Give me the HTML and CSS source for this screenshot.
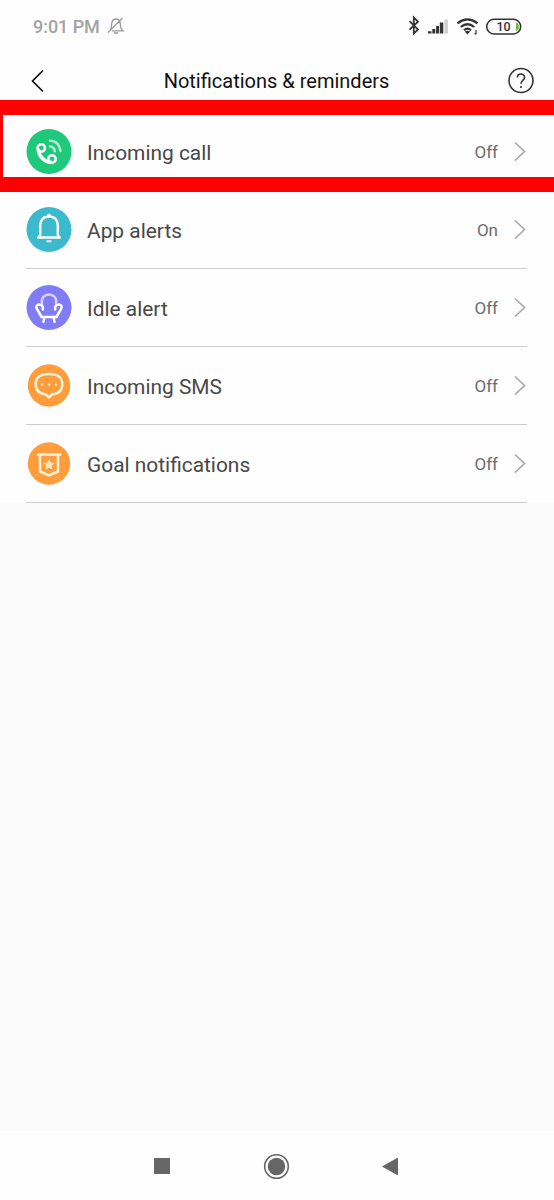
FILE: index.html
```html
<!DOCTYPE html>
<html lang="en">
<head>
<meta charset="utf-8">
<title>Notifications &amp; reminders</title>
<link rel="stylesheet" href="styles.css">
</head>
<body>
<div class="screen">
  <header class="status">
    <span class="time">9:01 PM</span>
    <svg class="mute" width="18" height="20" viewBox="0 0 18 20"><path d="M3 14.5C5 12.5 4.4 10 4.8 7C5.2 4 7 3 9 3S12.800 4 13.200 7C13.600 10 13 12.500 15.800 14.800H5M7 17H11M1 16.500L15.500 2"/></svg>
    <span class="grow"></span>
    <svg class="indicators" width="114" height="24" viewBox="0 0 114 24">
      <path class="bt" d="M1.500 7.200L10 15.600L5.800 19.500V3.500L10 7.700L1.500 15.600"/>
      <g class="bars"><path d="M20 17.300H23.500V19.500H20ZM24.300 15H27.300V19.500H24.300ZM28.100 12H31V19.500H28.100ZM31.800 8.500H35.300V19.500H31.800Z"/><path class="faint" d="M36.500 5.500H39.800V19.500H36.500Z"/></g>
      <path class="waves" d="M49.500 9.300Q59.500 1.500 69.500 9.300M52.800 13Q59.500 7.500 66.200 13M56 16.300Q59.500 13 63 16.300"/>
      <path class="fill" d="M56.800 17.600Q59.500 16 62.200 17.600L59.500 20.500ZM67.400 16V19H66L67.900 21L68.600 20V16Z"/>
      <rect class="battery" x="78.700" y="5.300" width="34" height="14.600" rx="7.300"/>
      <path class="charge" d="M108 8.500Q111 9.400 111 12.700T108 17Z"/>
      <text class="level" x="95.500" y="17.200">10</text>
    </svg>
  </header>
  <div class="titlebar">
    <svg class="back" width="14" height="24" viewBox="0 0 14 24"><path d="M12 1.500L1.500 12L12 22.500"/></svg>
    <h1 class="title">Notifications &amp; reminders</h1>
    <svg class="help" width="28" height="28" viewBox="0 0 28 28"><circle cx="14" cy="13.500" r="12"/><path d="M10.400 10.600C10.400 5.900 17.600 5.900 17.600 10.500C17.600 13.500 14 13.300 14 16.700"/><circle class="dot" cx="14" cy="20" r="1.100"/></svg>
  </div>
  <main class="list">
    <div class="row highlighted">
      <svg class="icon call" width="46" height="46" viewBox="0 0 46 46"><circle class="disc" cx="23" cy="23.500" r="22.500"/><circle class="shape" cx="15.300" cy="20" r="3.700"/><circle class="shape" cx="26" cy="31" r="3.700"/><path class="shape thick" d="M12.300 22C13 28.500 18.500 34.300 25 34.300"/><path class="soft" d="M24 12.800C30 12.800 34 17 34.500 23M24 18.500C26.800 18.700 28.500 20.500 28.800 23.300"/></svg>
      <span class="label">Incoming call</span><span class="value">Off</span>
      <svg class="chevron" width="12" height="20" viewBox="0 0 12 20"><path d="M1 1.500L10.500 10.500L1 19.500"/></svg>
    </div>
    <div class="row">
      <svg class="icon alerts" width="46" height="46" viewBox="0 0 46 46"><circle class="disc" cx="23" cy="23.500" r="22.500"/><path class="shape" d="M12.200 31.500H33.800L31.800 29V19.500C31.800 14 28.500 10.500 23 10.500S14.200 14 14.200 19.500V29ZM22.500 9H23.500"/><path class="soft" d="M21.500 35.300H24.500"/></svg>
      <span class="label">App alerts</span><span class="value">On</span>
      <svg class="chevron" width="12" height="20" viewBox="0 0 12 20"><path d="M1 1.500L10.500 10.500L1 19.500"/></svg>
    </div>
    <div class="row">
      <svg class="icon idle" width="46" height="46" viewBox="0 0 46 46"><circle class="disc" cx="23" cy="23.500" r="22.500"/><path class="soft" d="M16 19.500C13.500 7.500 32.500 7.500 30 19.500"/><path class="shape" d="M16.800 25.500C18 20 12 19.800 10.500 22C9.500 24.500 12 26 13 28.500L15.600 33H30.400L33 28.500C34 26 36.500 24.500 35.500 22C34 19.800 28 20 29.200 25.500M18.500 33L17.500 37.800M27.500 33L28.500 37.800"/></svg>
      <span class="label">Idle alert</span><span class="value">Off</span>
      <svg class="chevron" width="12" height="20" viewBox="0 0 12 20"><path d="M1 1.500L10.500 10.500L1 19.500"/></svg>
    </div>
    <div class="row">
      <svg class="icon sms" width="46" height="46" viewBox="0 0 46 46"><circle class="disc" cx="23" cy="23.500" r="21.200"/><path class="shape" d="M20 32.500L23 35.300L26 32.500C32.500 31.800 36.300 28 36.300 22.300C36.300 15.500 31.800 11.900 23 11.900S9.700 15.500 9.700 22.300C9.700 28 13.500 31.800 20 32.500Z"/><g class="dots"><circle cx="16" cy="22.500" r="1.300"/><circle cx="23" cy="22.500" r="1.300"/><circle cx="30" cy="22.500" r="1.300"/></g></svg>
      <span class="label">Incoming SMS</span><span class="value">Off</span>
      <svg class="chevron" width="12" height="20" viewBox="0 0 12 20"><path d="M1 1.500L10.500 10.500L1 19.500"/></svg>
    </div>
    <div class="row">
      <svg class="icon goal" width="46" height="46" viewBox="0 0 46 46"><circle class="disc" cx="23" cy="23.500" r="21.200"/><path class="shape" d="M12 14.500H34.500M14 15V31.500L23 35.300L32 31.500V15"/><path class="star" d="M23 19L24.700 22.500L28.600 23L25.800 25.700L26.500 29.600L23 27.700L19.500 29.600L20.200 25.700L17.400 23L21.300 22.500Z"/></svg>
      <span class="label">Goal notifications</span><span class="value">Off</span>
      <svg class="chevron" width="12" height="20" viewBox="0 0 12 20"><path d="M1 1.500L10.500 10.500L1 19.500"/></svg>
    </div>
  </main>
  <nav class="nav">
    <svg width="28" height="28" viewBox="0 0 28 28"><rect x="6" y="6" width="16" height="16" rx=".5"/></svg>
    <svg width="28" height="28" viewBox="0 0 28 28"><circle cx="14.500" cy="14.500" r="8.700"/><circle class="ring" cx="14.500" cy="14.500" r="11.800"/></svg>
    <svg width="28" height="28" viewBox="0 0 28 28"><path d="M6 14.500L21 6Q22 5.500 22 6.500V22.500Q22 23.500 21 23Z"/></svg>
  </nav>
</div>
</body>
</html>
```
FILE: styles.css
```css
*, *::after { box-sizing: border-box; }
body { margin: 0; background: #fbfbfb; font-family: Roboto, "Liberation Sans", sans-serif; }
svg { display: block; flex: none; fill: none; }
.screen { height: 1200px; display: flex; flex-direction: column; }
.status { height: 52px; padding: 0 32px 0 33px; display: flex; align-items: center; background: #fefefe; }
.time { padding-top: 2px; font-size: 18px; font-weight: 500; line-height: 24px; letter-spacing: -.05px; color: #a3a3a3; }
.mute { margin-left: 7px; stroke: #999; stroke-width: 1.300; }
.grow { flex: 1; }
.bt { stroke: #333; stroke-width: 1.800; }
.bars, .fill { fill: #333; }
.bars .faint { fill: #ccc; }
.waves { stroke: #333; stroke-width: 2.200; }
.battery { stroke: #333; stroke-width: 1.500; }
.charge { fill: #6dba38; }
.level { font-size: 12.500px; font-weight: 500; text-anchor: middle; fill: #333; }
.titlebar { height: 61px; padding: 0 19px 4px 31px; display: flex; align-items: center; justify-content: space-between; background: #fefefe; }
.back { stroke: #111; stroke-width: 1.700; }
.title { margin: 0 0 0 1px; padding-top: 1px; font-size: 20px; font-weight: 400; line-height: 28px; color: #111; }
.help { stroke: #333; stroke-width: 1.600; }
.help .dot { fill: #333; stroke: none; }
.list { padding: 0 27px 0 26px; background: #fefefe; }
.row { height: 78px; padding-bottom: 1px; display: flex; align-items: center; border-bottom: 1px solid #ccc; }
.highlighted { position: relative; }
.highlighted::after { content: ""; position: absolute; top: -13px; left: -26px; right: -27px; height: 92px; border: solid #f00; border-width: 15px 0 15px 3px; }
.label { flex: 1; margin-left: 15px; padding-top: 4px; font-size: 20.900px; line-height: 28px; color: #484848; }
.value { padding-top: 2px; font-size: 17px; line-height: 24px; color: #6c6c6c; }
.chevron { margin: 0 1px 0 16px; stroke: #aaa; stroke-width: 1.700; }
.disc { fill: #ff9d3d; }
.call .disc { fill: #1fc97b; }
.alerts .disc { fill: #3bbace; }
.idle .disc { fill: #807cf6; }
.shape, .soft { stroke: #fff; stroke-width: 2.500; stroke-linecap: round; stroke-linejoin: round; }
.thick { stroke-width: 3.500; }
.soft { opacity: .65; }
.sms .shape, .goal .shape { stroke: #fff3dc; }
.dots, .star { fill: #ffe3b8; }
.nav { height: 69px; margin-top: auto; padding: 1px 150px 0 148px; display: flex; align-items: center; justify-content: space-between; background: #fefefe; }
.nav svg { fill: #666; }
.nav .ring { fill: none; stroke: #666; stroke-width: 1.600; }
```
